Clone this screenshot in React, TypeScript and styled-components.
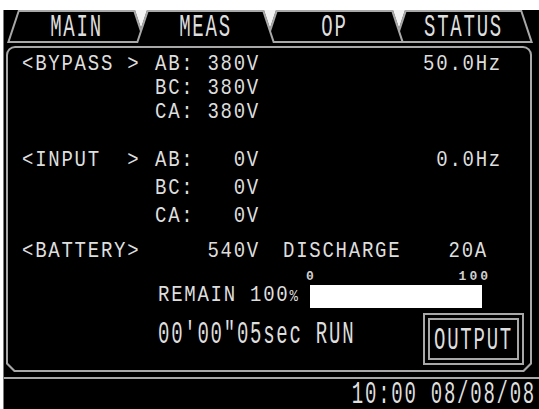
import React from "react";
import styled, { createGlobalStyle } from "styled-components";

const LINE = "#a8a8a8";
const INK = "#dedede";

const GlobalStyle = createGlobalStyle`
  html, body { margin: 0; padding: 0; background: #fff; }
  body { font-family: "Liberation Mono", "DejaVu Sans Mono", monospace; }
`;

const Screen = styled.div`
  margin: 10px 0 0 3px;
  width: 535px;
  height: 399px;
  background: #000;
  border-left: 1px solid #7a7a7a;
  display: flex;
  flex-direction: column;
  color: ${INK};
  font-family: "Liberation Mono", "DejaVu Sans Mono", monospace;
  font-size: 19px;
  letter-spacing: 1.75px;
  font-variant-numeric: slashed-zero;
  overflow: hidden;
`;

const TabBar = styled.div`
  flex: none;
  display: flex;
  height: 33px;
  padding-left: 3px;
`;

const Tab = styled.div<{ $active?: boolean; $z: number; $first?: boolean }>`
  position: relative;
  z-index: ${(p) => p.$z};
  flex: none;
  box-sizing: border-box;
  width: 139px;
  height: 33px;
  padding-top: 11px;
  margin-left: ${(p) => (p.$first ? 0 : -11)}px;
  display: flex;
  align-items: flex-start;
  justify-content: center;
  &::before,
  &::after {
    content: "";
    position: absolute;
    inset: 0;
  }
  &::before {
    background: ${LINE};
    clip-path: polygon(11px 0, calc(100% - 11px) 0, 100% 100%, 0 100%);
  }
  &::after {
    background: #000;
    clip-path: ${(p) =>
      p.$active
        ? "polygon(12.4px 2px, calc(100% - 12.4px) 2px, calc(100% - 2.1px) 100%, 2.1px 100%)"
        : "polygon(12.4px 2px, calc(100% - 12.4px) 2px, calc(100% - 2.8px) calc(100% - 2px), 2.8px calc(100% - 2px))"};
  }
`;

const Notch = styled.div`
  position: relative;
  z-index: 6;
  flex: none;
  width: 12px;
  height: 18px;
  margin-left: -11px;
  background: #f2f2f2;
  clip-path: polygon(0 0, 100% 0, 50% 100%);
`;

const TallText = styled.span`
  position: relative;
  z-index: 1;
  display: inline-block;
  line-height: 14px;
  white-space: pre;
  transform: scaleY(1.68);
`;

const Panel = styled.div`
  flex: none;
  margin: 3px 0 0 2px;
  width: 526px;
  height: 326px;
  box-sizing: border-box;
  padding: 2px;
  background: ${LINE};
  border-radius: 9px 9px 0 0;
  clip-path: polygon(0 0, 100% 0, 100% calc(100% - 8px), calc(100% - 8px) 100%, 8px 100%, 0 calc(100% - 8px));
`;

const PanelInner = styled.div`
  height: 100%;
  box-sizing: border-box;
  background: #000;
  border-radius: 7px 7px 0 0;
  clip-path: polygon(0 0, 100% 0, 100% calc(100% - 7px), calc(100% - 7px) 100%, 7px 100%, 0 calc(100% - 7px));
  padding: 4px 0 0 14px;
  display: flex;
  flex-direction: column;
`;

const DataRow = styled.div<{ $h: number; $mt?: number }>`
  display: grid;
  grid-template-columns: 133px 105px 242px;
  height: ${(p) => p.$h}px;
  line-height: ${(p) => p.$h}px;
  margin-top: ${(p) => p.$mt ?? 0}px;
  white-space: pre;
  transform: scaleY(1.2);
`;

const Phase = styled.div`
  display: flex;
  justify-content: space-between;
`;

const RightCell = styled.div`
  text-align: right;
`;

const BatteryRow = styled.div`
  display: grid;
  grid-template-columns: 133px 105px 23px 118px 87px;
  height: 24px;
  line-height: 24px;
  margin-top: 9px;
  white-space: pre;
  transform: scaleY(1.2);
`;

const RemainRow = styled.div`
  display: flex;
  align-items: flex-end;
  height: 38px;
  margin-top: 7px;
  padding-left: 136px;
`;

const RemainText = styled.div`
  width: 152px;
  line-height: 23px;
  white-space: pre;
  transform: scaleY(1.2);
`;

const Pct = styled.span`
  font-size: 14px;
  letter-spacing: 0;
`;

const BarBlock = styled.div`
  width: 172px;
  display: flex;
  flex-direction: column;
`;

const Scale = styled.div`
  display: flex;
  justify-content: space-between;
  height: 14px;
  line-height: 14px;
  margin: 0 -9px 1px -4px;
  font-size: 13px;
  font-weight: bold;
  letter-spacing: 3px;
  color: #d0d0d0;
`;

const Bar = styled.div`
  height: 23px;
  background: #fff;
`;

const BottomRow = styled.div`
  display: flex;
  align-items: flex-start;
  margin-top: 5px;
`;

const TimeText = styled(TallText)`
  margin: 14.5px 0 0 136px;
`;

const OutputButton = styled.div`
  margin-left: auto;
  margin-right: 6px;
  width: 101px;
  height: 52px;
  box-sizing: border-box;
  border: 2px solid ${LINE};
  padding: 3px;
`;

const OutputInner = styled.div`
  height: 100%;
  box-sizing: border-box;
  border: 2px solid ${LINE};
  padding-top: 4px;
  display: flex;
  align-items: center;
  justify-content: center;
`;

const StatusBar = styled.div`
  flex: 1;
  margin-top: 5px;
  border-top: 2px solid ${LINE};
  display: flex;
  justify-content: flex-end;
  align-items: flex-start;
  padding: 9px 3px 0 0;
`;

type PhaseLine = { label?: string; phase: string; value: string; hz?: string };

const bypass: PhaseLine[] = [
  { label: "<BYPASS >", phase: "AB:", value: "380V", hz: "50.0Hz" },
  { phase: "BC:", value: "380V" },
  { phase: "CA:", value: "380V" },
];

const input: PhaseLine[] = [
  { label: "<INPUT  >", phase: "AB:", value: "0V", hz: "0.0Hz" },
  { phase: "BC:", value: "0V" },
  { phase: "CA:", value: "0V" },
];

const tabs = [
  { name: "MAIN", z: 3 },
  { name: "MEAS", z: 4, active: true },
  { name: "OP", z: 3 },
  { name: "STATUS", z: 2 },
];

function Group({ lines, h, mt }: { lines: PhaseLine[]; h: number; mt: number }) {
  return (
    <>
      {lines.map((l, i) => (
        <DataRow key={l.phase} $h={h} $mt={i === 0 ? mt : 0}>
          <div>{l.label ?? ""}</div>
          <Phase>
            <span>{l.phase}</span>
            <span>{l.value}</span>
          </Phase>
          <RightCell>{l.hz ?? ""}</RightCell>
        </DataRow>
      ))}
    </>
  );
}

export default function App() {
  return (
    <>
      <GlobalStyle />
      <Screen>
        <TabBar>
          {tabs.map((t, i) => (
            <React.Fragment key={t.name}>
              {i > 0 && <Notch />}
              <Tab $z={t.z} $active={t.active} $first={i === 0}>
                <TallText>{t.name}</TallText>
              </Tab>
            </React.Fragment>
          ))}
        </TabBar>
        <Panel>
          <PanelInner>
            <Group lines={bypass} h={24} mt={0} />
            <Group lines={input} h={28} mt={22} />
            <BatteryRow>
              <div>{"<BATTERY>"}</div>
              <RightCell>540V</RightCell>
              <div />
              <div>DISCHARGE</div>
              <RightCell>20A</RightCell>
            </BatteryRow>
            <RemainRow>
              <RemainText>
                REMAIN 100<Pct>%</Pct>
              </RemainText>
              <BarBlock>
                <Scale>
                  <span>0</span>
                  <span>100</span>
                </Scale>
                <Bar />
              </BarBlock>
            </RemainRow>
            <BottomRow>
              <TimeText>{"00'00\"05sec RUN"}</TimeText>
              <OutputButton>
                <OutputInner>
                  <TallText>OUTPUT</TallText>
                </OutputInner>
              </OutputButton>
            </BottomRow>
          </PanelInner>
        </Panel>
        <StatusBar>
          <TallText>10:00 08/08/08</TallText>
        </StatusBar>
      </Screen>
    </>
  );
}
